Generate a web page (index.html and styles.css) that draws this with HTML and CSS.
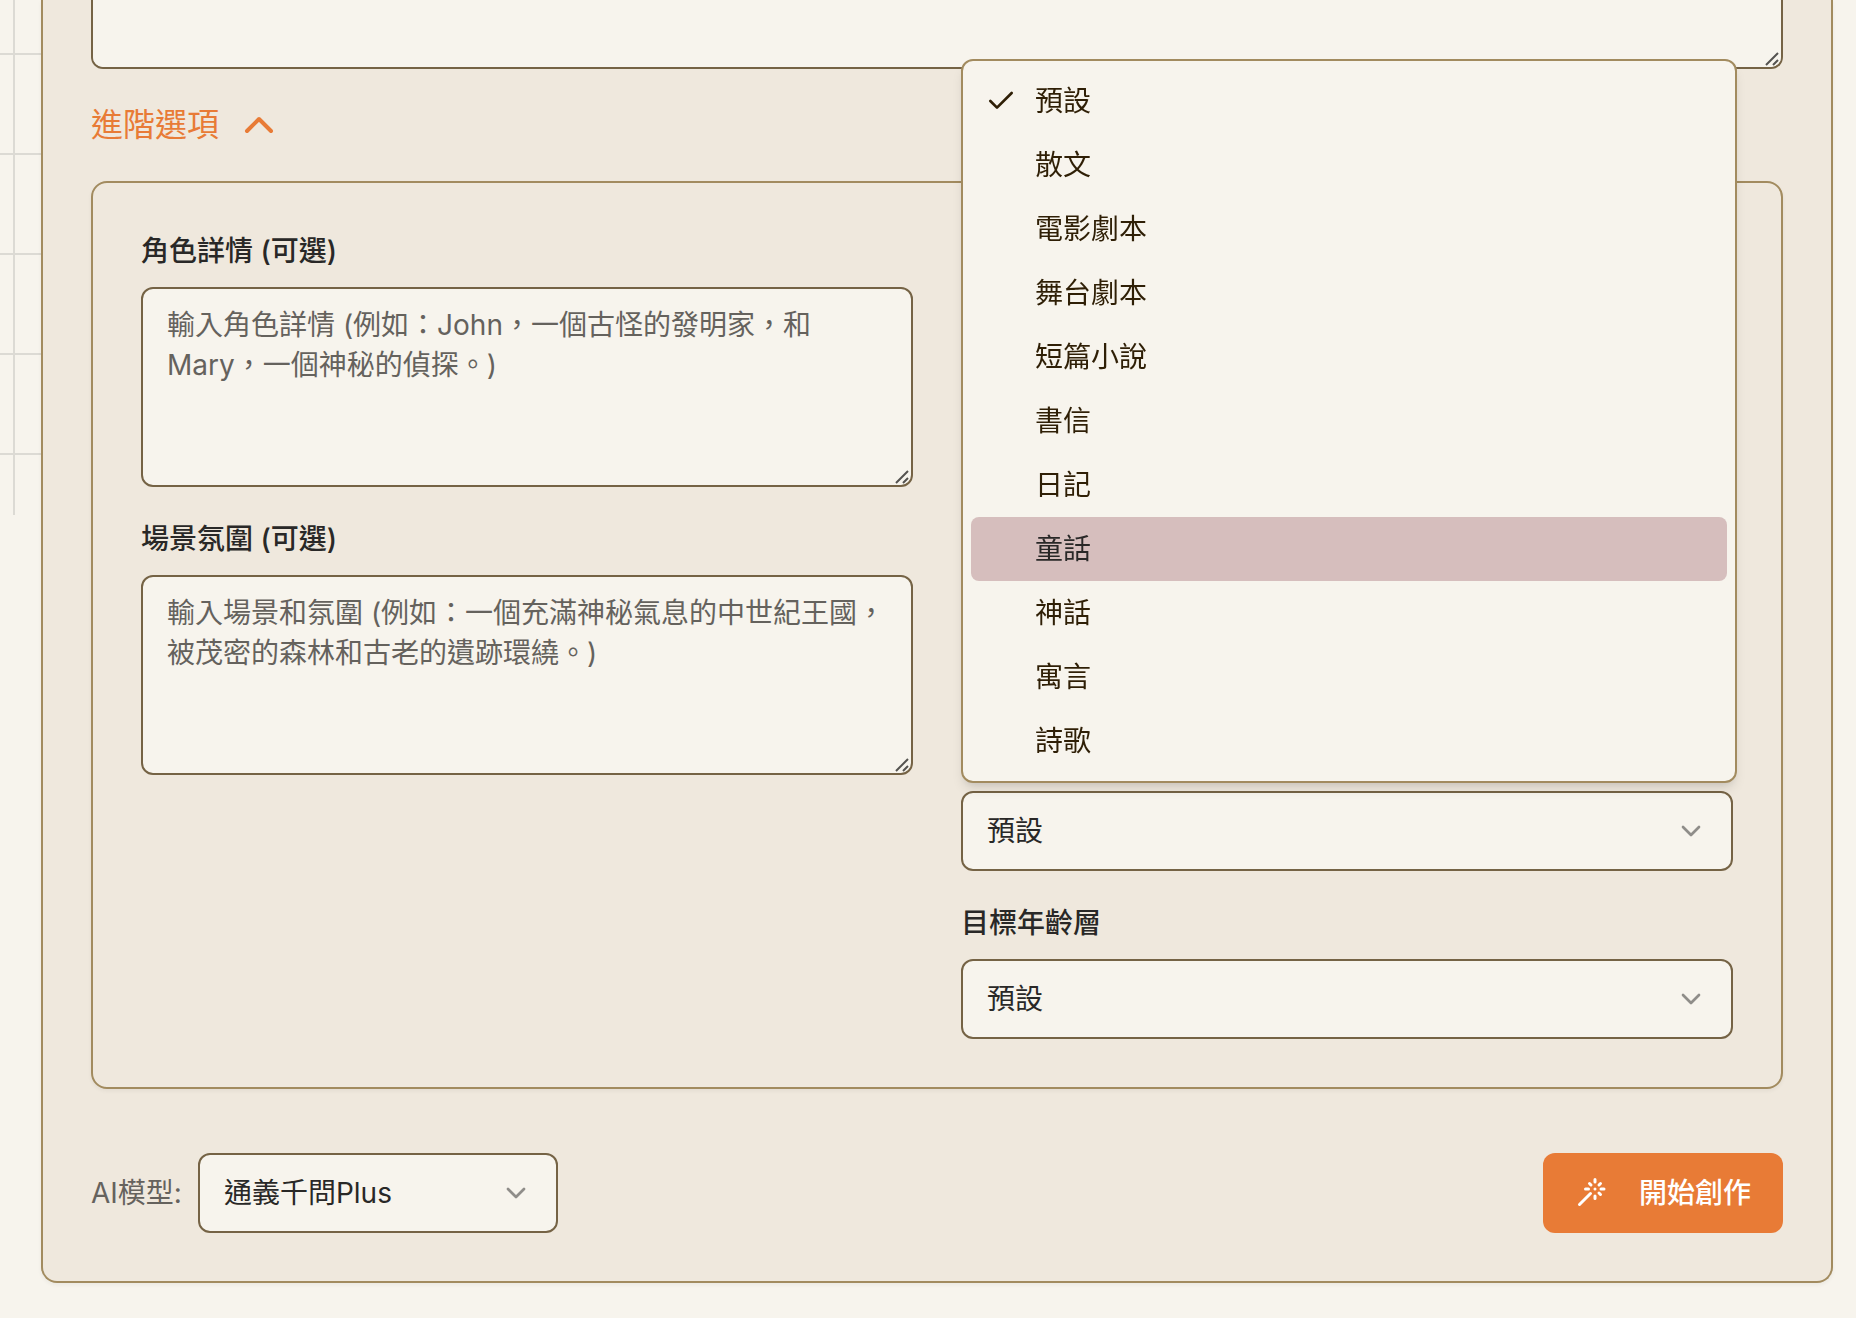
FILE: index.html
```html
<!DOCTYPE html>
<html lang="zh-Hant">
<head>
  <meta charset="utf-8">
  <meta name="viewport" content="width=device-width, initial-scale=1">
  <title>開始創作</title>
  <link rel="stylesheet" href="styles.css">
</head>
<body>
  <svg class="sprite" aria-hidden="true">
    <symbol id="chevron-down" viewBox="0 0 24 24"><path d="m6 9 6 6 6-6"/></symbol>
    <symbol id="chevron-up" viewBox="0 0 24 24"><path d="m18 15-6-6-6 6"/></symbol>
    <symbol id="check" viewBox="0 0 24 24"><path d="M20 6 9 17l-5-5"/></symbol>
    <symbol id="grip" viewBox="0 0 14 14"><path d="M1 13 13 1M8 13l5-5"/></symbol>
  </svg>

  <main class="page">
    <form class="card">
      <div class="text-box">
        <textarea class="textarea textarea-story"></textarea>
        <svg class="grip"><use href="#grip"/></svg>
      </div>

      <button class="toggle" type="button" aria-expanded="true">
        進階選項
        <svg class="icon icon-lg"><use href="#chevron-up"/></svg>
      </button>

      <section class="panel">
        <div class="column">
          <div class="field">
            <label class="label" for="characters">角色詳情 (可選)</label>
            <div class="text-box">
              <textarea class="textarea" id="characters" placeholder="輸入角色詳情 (例如：John，一個古怪的發明家，和 Mary，一個神秘的偵探。)"></textarea>
              <svg class="grip"><use href="#grip"/></svg>
            </div>
          </div>
          <div class="field">
            <label class="label" for="scene">場景氛圍 (可選)</label>
            <div class="text-box">
              <textarea class="textarea" id="scene" placeholder="輸入場景和氛圍 (例如：一個充滿神秘氣息的中世紀王國，被茂密的森林和古老的遺跡環繞。)"></textarea>
              <svg class="grip"><use href="#grip"/></svg>
            </div>
          </div>
        </div>

        <div class="column column-selects">
          <div class="field field-format">
            <div class="select-box">
              <select class="select" aria-label="預設"><option>預設</option></select>
              <svg class="icon select-arrow"><use href="#chevron-down"/></svg>
              <ul class="menu" role="listbox">
                <li class="menu-item" role="option" aria-selected="true"><svg class="icon menu-check"><use href="#check"/></svg>預設</li>
                <li class="menu-item" role="option">散文</li>
                <li class="menu-item" role="option">電影劇本</li>
                <li class="menu-item" role="option">舞台劇本</li>
                <li class="menu-item" role="option">短篇小說</li>
                <li class="menu-item" role="option">書信</li>
                <li class="menu-item" role="option">日記</li>
                <li class="menu-item menu-item-active" role="option">童話</li>
                <li class="menu-item" role="option">神話</li>
                <li class="menu-item" role="option">寓言</li>
                <li class="menu-item" role="option">詩歌</li>
              </ul>
            </div>
          </div>
          <div class="field field-age">
            <label class="label" for="age">目標年齡層</label>
            <div class="select-box">
              <select class="select" id="age"><option>預設</option></select>
              <svg class="icon select-arrow"><use href="#chevron-down"/></svg>
            </div>
          </div>
        </div>
      </section>

      <footer class="actions">
        <div class="model">
          <label class="model-label" for="model">AI模型:</label>
          <div class="select-box model-box">
            <select class="select" id="model"><option>通義千問Plus</option></select>
            <svg class="icon select-arrow"><use href="#chevron-down"/></svg>
          </div>
        </div>
        <button class="submit" type="button">
          <svg class="icon" viewBox="0 0 32 32">
            <path class="wand" d="M4.500 27.500 15.500 16.500M20 2.500v2.500M20 19v2.500M26 12h3M10.500 12h3M25.500 6.500 24 8M24 16l1.500 1.500M14.500 6.500 16 8M20 12v0"/>
          </svg>
          開始創作
        </button>
      </footer>
    </form>
  </main>
</body>
</html>
```
FILE: styles.css
```css
:root {
  --paper: #f7f4ed;
  --card: #efe8dd;
  --line: #a28b5f;
  --line-dark: #756345;
  --ink: #292827;
  --muted: #65625d;
  --accent: #e87b36;
  --grid: #dcdad4;
}

* {
  box-sizing: border-box;
}

body {
  position: relative;
  margin: 0;
  min-height: 100vh;
  background: var(--paper);
  color: var(--ink);
  font: 400 28px/40px Inter, "Noto Sans CJK TC", sans-serif;
}

body::before {
  content: "";
  position: absolute;
  z-index: -1;
  top: 0;
  left: 0;
  width: 90%;
  height: 515px;
  background-image:
    linear-gradient(to right, var(--grid) 2px, transparent 2px),
    linear-gradient(to bottom, var(--grid) 2px, transparent 2px);
  background-size: 100px 100px;
  background-position: 13px 53px;
}

.sprite {
  display: none;
}

.page {
  padding: 0 23px 32px 41px;
}

.card {
  display: flex;
  flex-direction: column;
  gap: 32px;
  padding: 0 48px 48px;
  border: 2px solid var(--line);
  border-top: 0;
  border-radius: 0 0 16px 16px;
  background: var(--card);
  box-shadow: 0 2px 4px rgb(0 0 0 / 5%);
}

.icon {
  flex: none;
  width: 32px;
  height: 32px;
  fill: none;
  stroke: currentColor;
  stroke-width: 2;
  stroke-linecap: round;
  stroke-linejoin: round;
}

.icon-lg {
  width: 48px;
  height: 48px;
}

.text-box,
.select-box {
  position: relative;
  display: flex;
}

.textarea {
  width: 100%;
  height: 200px;
  margin: 0;
  padding: 16px 24px;
  border: 2px solid var(--line-dark);
  border-radius: 12px;
  outline: 0;
  background: var(--paper);
  color: inherit;
  font: inherit;
  resize: none;
}

.textarea::placeholder {
  color: var(--muted);
  opacity: 1;
}

.textarea-story {
  height: 69px;
  border-top: 0;
  border-radius: 0 0 12px 12px;
}

.grip {
  position: absolute;
  right: 4px;
  bottom: 3px;
  width: 14px;
  height: 14px;
  fill: none;
  stroke: #555350;
  stroke-width: 2;
}

.toggle {
  display: flex;
  align-items: center;
  align-self: flex-start;
  gap: 16px;
  padding: 0;
  border: 0;
  background: none;
  color: var(--accent);
  font: inherit;
  font-size: 32px;
  line-height: 48px;
}

.panel {
  display: grid;
  grid-template-columns: 1fr 1fr;
  gap: 48px;
  padding: 48px;
  border: 2px solid var(--line);
  border-radius: 16px;
  box-shadow: 0 2px 4px rgb(0 0 0 / 5%);
}

.column {
  display: flex;
  flex-direction: column;
  gap: 32px;
}

.column-selects {
  display: grid;
  grid-template-rows: repeat(5, 136px);
}

.field {
  display: flex;
  flex-direction: column;
  gap: 16px;
}

.field-format {
  grid-row: 4;
  justify-content: flex-end;
}

.field-age {
  grid-row: 5;
}

.label {
  font-weight: 500;
}

.select {
  width: 100%;
  height: 80px;
  margin: 0;
  padding: 0 64px 0 24px;
  border: 2px solid var(--line-dark);
  border-radius: 12px;
  outline: 0;
  background: var(--paper);
  color: inherit;
  font: inherit;
  appearance: none;
}

.select-arrow {
  position: absolute;
  top: 24px;
  right: 26px;
  opacity: 0.5;
  pointer-events: none;
}

.menu {
  position: absolute;
  z-index: 1;
  bottom: calc(100% + 8px);
  left: 0;
  width: calc(100% + 4px);
  margin: 0;
  padding: 8px;
  border: 2px solid var(--line);
  border-radius: 12px;
  background: var(--paper);
  box-shadow: 0 8px 12px -2px rgb(0 0 0 / 10%), 0 4px 8px -4px rgb(0 0 0 / 10%);
  color: #2f1f06;
  list-style: none;
}

.menu-item {
  position: relative;
  padding: 12px 16px 12px 64px;
  border-radius: 8px;
}

.menu-item-active {
  background: #d6bebd;
  color: var(--ink);
}

.menu-check {
  position: absolute;
  top: 16px;
  left: 14px;
}

.actions {
  display: flex;
  align-items: center;
  justify-content: space-between;
  padding-top: 32px;
}

.model {
  display: flex;
  align-items: center;
  gap: 16px;
}

.model-label {
  color: var(--muted);
}

.model-box {
  width: 360px;
}

.submit {
  display: flex;
  align-items: center;
  gap: 32px;
  height: 80px;
  padding: 0 32px;
  border: 0;
  border-radius: 12px;
  background: var(--accent);
  color: #fff;
  font: inherit;
  font-weight: 500;
}

.wand {
  stroke-width: 3;
}
```
